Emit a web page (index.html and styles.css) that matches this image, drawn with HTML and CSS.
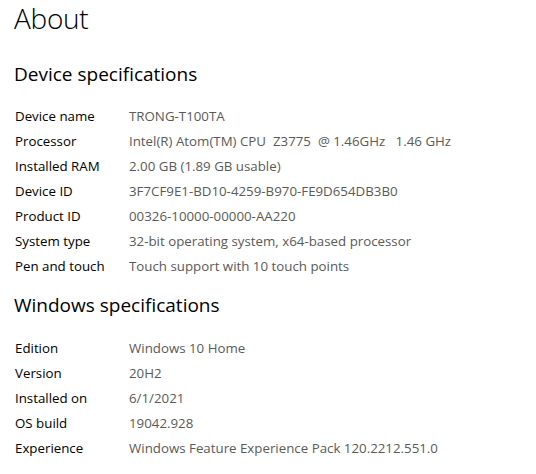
FILE: index.html
```html
<!DOCTYPE html>
<html>
<head>
<meta charset="utf-8">
<link rel="stylesheet" href="styles.css">
</head>
<body>
<div class="page">
  <h1 class="title">About</h1>
  <h2 class="section section-first">Device specifications</h2>
  <div class="specs">
    <div class="label">Device name</div><div class="value">TRONG-T100TA</div>
    <div class="label">Processor</div><div class="value">Intel(R) Atom(TM) CPU&nbsp; Z3775&nbsp; @ 1.46GHz&nbsp;&nbsp; 1.46 GHz</div>
    <div class="label">Installed RAM</div><div class="value">2.00 GB (1.89 GB usable)</div>
    <div class="label">Device ID</div><div class="value">3F7CF9E1-BD10-4259-B970-FE9D654DB3B0</div>
    <div class="label">Product ID</div><div class="value">00326-10000-00000-AA220</div>
    <div class="label">System type</div><div class="value">32-bit operating system, x64-based processor</div>
    <div class="label">Pen and touch</div><div class="value">Touch support with 10 touch points</div>
  </div>
  <h2 class="section section-next">Windows specifications</h2>
  <div class="specs">
    <div class="label">Edition</div><div class="value">Windows 10 Home</div>
    <div class="label">Version</div><div class="value">20H2</div>
    <div class="label">Installed on</div><div class="value">6/1/2021</div>
    <div class="label">OS build</div><div class="value">19042.928</div>
    <div class="label">Experience</div><div class="value">Windows Feature Experience Pack 120.2212.551.0</div>
  </div>
</div>
</body>
</html>
```
FILE: styles.css
```css
html, body {
  margin: 0;
  padding: 0;
  background: #ffffff;
}
.page {
  padding: 0 0 0 14px;
  font-family: "Open Sans", "Noto Sans", sans-serif;
  color: #000;
}
.title {
  margin: 0;
  font-size: 28px;
  font-weight: 300;
  line-height: 36px;
  letter-spacing: -0.3px;
}
.section {
  font-size: 19px;
  font-weight: 400;
  line-height: 28px;
  margin: 0 0 17px 0;
}
.section-first {
  margin-top: 24px;
  margin-bottom: 16px;
}
.section-next {
  margin-top: 12px;
}
.specs {
  display: grid;
  grid-template-columns: 114px 1fr;
  padding-left: 1px;
}
.label, .value {
  font-size: 13.3px;
  line-height: 25px;
  white-space: pre;
}
.label { color: #000; }
.value { color: #5a5a5a; }
```
